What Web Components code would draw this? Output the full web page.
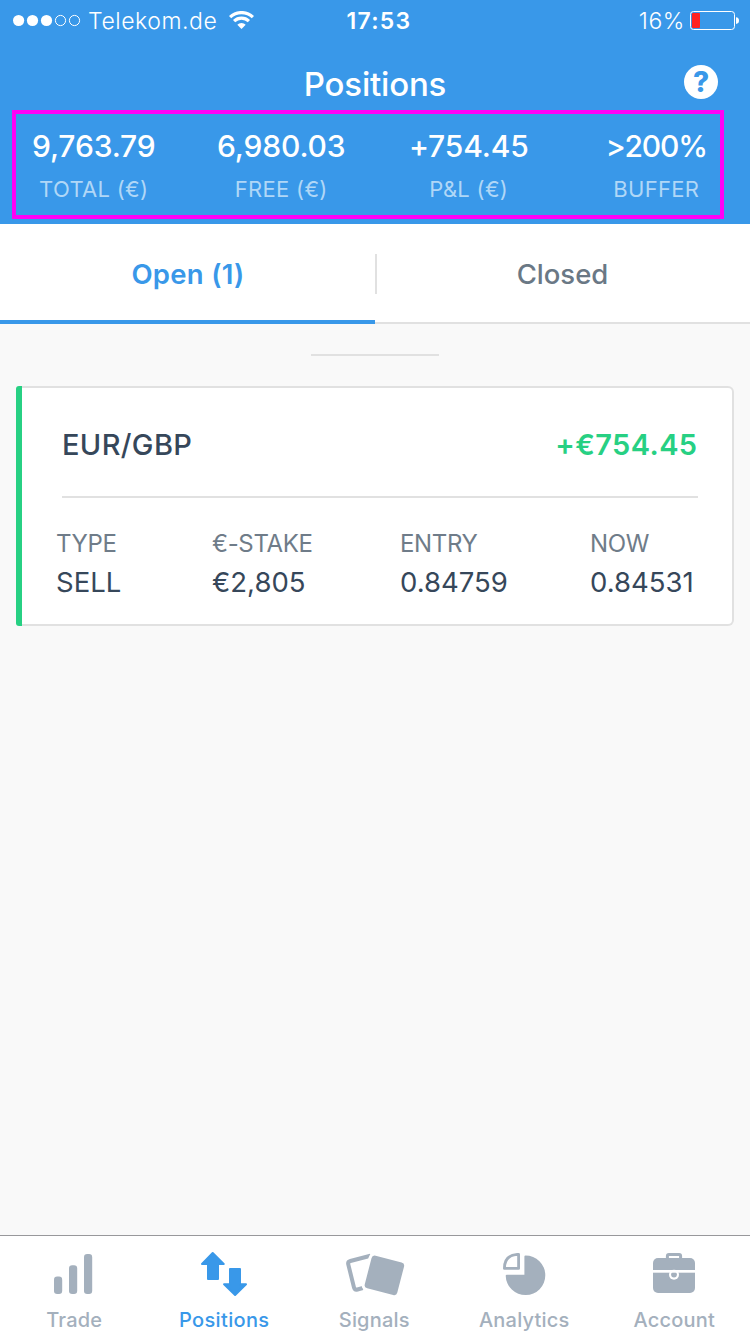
<!DOCTYPE html>
<html lang="en">
<head>
<meta charset="utf-8">
<title>Positions</title>
<style>
	body{
		margin: 0;
		font-family: Inter, "Liberation Sans", sans-serif;
		background-color: #f9f9f9;
	}
</style>
</head>
<body>
<positions-app></positions-app>
<script>
(function(){
// Start of enclosed scope

// Base for all elements, each one only supplies its template.
class BaseElement extends HTMLElement {
	constructor () {
		super();
		this.attachShadow({mode: 'open'});
	}
	connectedCallback(){
		this.shadowRoot.innerHTML = this.template();
	}
	attr(name){
		return this.getAttribute(name) || '';
	}
}

class StatusBar extends BaseElement {
	template(){ return html`<style>
	:host{
		display: grid;
		grid-template-columns: 1fr auto 1fr;
		align-items: center;
		height: 41px;
		padding: 0 11px 0 12px;
		color: white;
		font-size: 23px;
		line-height: 28px;
	}
	div{ display: flex; align-items: center; }
	.carrier{ letter-spacing: 0.55px; margin-left: 7px; font-weight: 300; }
	.wifi{ margin-left: 11.5px; }
	.time{ padding-left: 7px; font-weight: 600; letter-spacing: 1.3px; }
	.right{ justify-content: flex-end; gap: 5px; font-weight: 300; letter-spacing: 0.6px; }
</style>
<div>
	<svg width="69" height="13" viewBox="0 0 69 13">
		<g fill="white"><circle cx="6.6" cy="6.5" r="5.6"/><circle cx="20.5" cy="6.5" r="5.6"/><circle cx="34.5" cy="6.5" r="5.6"/></g>
		<g fill="none" stroke="white"><circle cx="48.5" cy="6.5" r="5.1"/><circle cx="62.5" cy="6.5" r="5.1"/></g>
	</svg>
	<span class="carrier">Telekom.de</span>
	<svg class="wifi" width="25" height="18.5" viewBox="0.5 0.5 25 18.5">
		<g fill="none" stroke="white" stroke-width="3.2">
			<path d="M1.6 6.7A16.3 16.3 0 0 1 24.4 6.7"/>
			<path d="M5.6 10.7A10.6 10.6 0 0 1 20.4 10.7"/>
		</g>
		<path d="M13 18.4L8.8 14.2A6 6 0 0 1 17.2 14.2Z" fill="white"/>
	</svg>
</div>
<span class="time">17:53</span>
<div class="right">
	<span>16%</span>
	<svg width="49" height="20" viewBox="0 0 49 20">
		<rect x="0.5" y="0.5" width="44" height="18" rx="3" fill="none" stroke="white"/>
		<rect x="1.9" y="2" width="8.1" height="15" rx="1" fill="#ff2320"/>
		<path d="M46 6.3Q49 6.5 49 9.6Q49 12.8 46 13Z" fill="white"/>
	</svg>
</div>`}
}

class TitleBar extends BaseElement {
	template(){ return html`<style>
	:host{
		display: grid;
		grid-template-columns: 1fr auto 1fr;
		align-items: center;
		height: 86px;
		color: white;
	}
	h1{
		grid-column: 2;
		margin: 0;
		font-size: 33px;
		font-weight: 450;
		line-height: 40px;
		letter-spacing: -0.2px;
	}
	.help{
		justify-self: end;
		display: grid;
		place-items: center;
		width: 34px;
		height: 34px;
		margin: 0 32px 4px 0;
		border-radius: 50%;
		background-color: white;
		color: #3998e9;
		font-size: 28px;
		font-weight: 800;
		line-height: 34px;
	}
</style>
<h1><slot></slot></h1>
<span class="help">?</span>`}
}

class AccountStat extends BaseElement {
	template(){ return html`<style>
	:host{
		display: flex;
		flex-direction: column;
		align-items: center;
		color: white;
	}
	.value{ font-size: 30px; font-weight: 450; line-height: 38px; letter-spacing: var(--value-spacing, -0.15px); }
	.label{ margin-top: 10px; font-size: 22px; line-height: 28px; letter-spacing: 0.3px; color: #b0d7f7; }
</style>
<span class="value"><slot></slot></span>
<span class="label">${this.attr('label')}</span>`}
}

class AccountSummary extends BaseElement {
	template(){ return html`<style>
	:host{
		display: grid;
		grid-template-columns: repeat(4, 1fr);
		height: 97px;
	}
	::slotted(:last-child){ --value-spacing: -1.2px; }
	/* Highlight frame lies over the header */
	.frame{
		position: absolute;
		top: 110px;
		left: 12px;
		width: 712px;
		height: 109px;
		box-sizing: border-box;
		border: 4px solid #ff00f6;
	}
</style>
<slot></slot>
<div class="frame"></div>`}
}

class TabItem extends BaseElement {
	template(){ return html`<style>
	:host{
		display: block;
		box-sizing: border-box;
		height: 100px;
		border-bottom: 2px solid #e1e1e1;
		color: #6a7885;
		font-size: 27.5px;
		font-weight: 500;
		line-height: 100px;
		text-align: center;
	}
	:host([active]){
		padding-left: 1px;
		border-bottom: 4px solid #3998e9;
		color: #3998e9;
		font-weight: 600;
		letter-spacing: 0.3px;
	}
</style>
<slot></slot>`}
}

class TabStrip extends BaseElement {
	template(){ return html`<style>
	:host{
		display: grid;
		grid-template-columns: 375px 375px;
		position: relative;
		background-color: white;
	}
	.divider{
		position: absolute;
		left: 375px;
		top: 30px;
		width: 2px;
		height: 40px;
		background-color: #e1e1e1;
	}
</style>
<slot></slot>
<div class="divider"></div>`}
}

class CardField extends BaseElement {
	template(){ return html`<style>
	:host{ display: flex; flex-direction: column; }
	.label{ padding-top: 1px; font-size: 24px; line-height: 39px; letter-spacing: -0.35px; color: #6f7c89; }
	.value{ font-size: 27.5px; line-height: 38px; color: #36475a; }
</style>
<span class="label">${this.attr('label')}</span>
<span class="value"><slot></slot></span>`}
}

class PositionCard extends BaseElement {
	template(){ return html`<style>
	:host{
		display: grid;
		grid-template-columns: 6px 1fr;
		height: 240px;
		margin: 0 16px;
	}
	.stripe{
		border-radius: 3px 0 0 3px;
		background-color: #27d083;
	}
	.content{
		border: 2px solid #e1e1e1;
		border-left: 0;
		border-radius: 0 6px 6px 0;
		background-color: white;
	}
	header{
		display: flex;
		justify-content: space-between;
		height: 108px;
		margin: 0 34px 0 40px;
		border-bottom: 2px solid #e1e1e1;
		font-size: 29px;
		line-height: 114px;
		color: #36475a;
	}
	.pair{ font-weight: 500; letter-spacing: 0.35px; }
	.profit{ margin-right: 0.5px; font-weight: 600; color: #27d083; letter-spacing: 0.4px; }
	.fields{
		display: grid;
		grid-template-columns: 156px 188px 190px auto;
		margin: 25px 0 0 34px;
	}
</style>
<div class="stripe"></div>
<div class="content">
	<header>
		<span class="pair">${this.attr('pair')}</span>
		<span class="profit">${this.attr('profit')}</span>
	</header>
	<div class="fields"><slot></slot></div>
</div>`}
}

// Icons are drawn on a field with the full width of one navigation item.
const icons = {
	trade: `<rect x="54" y="36.6" width="8.2" height="17.4" rx="3.2"/>
		<rect x="69" y="25.3" width="8.2" height="28.7" rx="3.2"/>
		<rect x="84" y="14" width="8.2" height="40" rx="3.2"/>`,
	positions: `<g stroke="currentColor" stroke-width="2" stroke-linejoin="round">
		<path d="M62.7 13L73.7 24H68V39H58V24H52Z"/>
		<path d="M80 29H90V44.2H96L85.1 55L74.1 44.2H80Z"/></g>`,
	signals: `<path d="M70.5 15.7L50.4 21Q47.6 21.8 48.3 24.5L54 47.5Q54.7 50.2 57.5 49.5L62.8 48" fill="none" stroke="currentColor" stroke-width="4"/>
		<rect x="67.6" y="18.6" width="33.6" height="33.6" rx="3.4" transform="rotate(14.5 84.4 35.4)" stroke="white" stroke-width="6" paint-order="stroke"/>`,
	analytics: `<path d="M74.4 16.6Q74.4 15.5 75.5 15.5A19.8 19.8 0 1 1 55.7 35.8Q55.7 34.7 56.8 34.7H74.4Z"/>
		<path d="M68.6 14.4V28.4H54.4Q54.4 15.4 67.2 14.4Z" fill="none" stroke="currentColor" stroke-width="2.8" stroke-linejoin="round"/>`,
	account: `<path d="M67.4 19V16Q67.4 14.5 68.9 14.5H79.1Q80.6 14.5 80.6 16V19" fill="none" stroke="currentColor" stroke-width="3"/>
		<rect x="53" y="18" width="42" height="35" rx="5"/>
		<circle cx="74" cy="34.8" r="5" fill="white"/>
		<circle cx="74" cy="34.6" r="2.9"/>
		<rect x="53" y="30" width="42" height="2.7" fill="white"/>`
};

class NavItem extends BaseElement {
	template(){ return html`<style>
	:host{
		display: flex;
		flex-direction: column;
		color: #a4b0bd;
		font-size: 20px;
		font-weight: 500;
		text-align: center;
		letter-spacing: 0.2px;
	}
	:host([active]){ color: #3998e9; font-weight: 550; letter-spacing: 0.35px; }
	svg{ display: block; }
	span{ margin-top: 4px; padding-right: 1.5px; line-height: 24px; }
</style>
<svg width="150" height="60" viewBox="0 4 150 60" fill="currentColor">${icons[this.attr('icon')]}</svg>
<span><slot></slot></span>`}
}

class BottomNav extends BaseElement {
	template(){ return html`<style>
	:host{
		display: grid;
		grid-template-columns: repeat(5, 150px);
		box-sizing: border-box;
		height: 99px;
		padding-top: 8px;
		border-top: 1px solid #98989b;
		background-color: white;
	}
</style>
<slot></slot>`}
}

class PositionsApp extends BaseElement {
	template(){ return html`<style>
	:host{
		display: flex;
		flex-direction: column;
		width: 750px;
		height: 1334px;
		overflow: hidden;
	}
	.top{ background-color: #3998e9; }
	main{ flex: 1; }
	hr{
		width: 128px;
		height: 2px;
		margin: 30px auto;
		border: 0;
		background-color: #e1e1e1;
	}
</style>
<div class="top">
	<status-bar></status-bar>
	<title-bar>Positions</title-bar>
	<account-summary>
		<account-stat label="TOTAL (€)">9,763.79</account-stat>
		<account-stat label="FREE (€)">6,980.03</account-stat>
		<account-stat label="P&amp;L (€)">+754.45</account-stat>
		<account-stat label="BUFFER">&gt;200%</account-stat>
	</account-summary>
</div>
<tab-strip>
	<tab-item active>Open (1)</tab-item>
	<tab-item>Closed</tab-item>
</tab-strip>
<main>
	<hr>
	<position-card pair="EUR/GBP" profit="+€754.45">
		<card-field label="TYPE">SELL</card-field>
		<card-field label="€-STAKE">€2,805</card-field>
		<card-field label="ENTRY">0.84759</card-field>
		<card-field label="NOW">0.84531</card-field>
	</position-card>
</main>
<bottom-nav>
	<nav-item icon="trade">Trade</nav-item>
	<nav-item icon="positions" active>Positions</nav-item>
	<nav-item icon="signals">Signals</nav-item>
	<nav-item icon="analytics">Analytics</nav-item>
	<nav-item icon="account">Account</nav-item>
</bottom-nav>`}
}

window.customElements.define('status-bar', StatusBar)
window.customElements.define('title-bar', TitleBar)
window.customElements.define('account-stat', AccountStat)
window.customElements.define('account-summary', AccountSummary)
window.customElements.define('tab-item', TabItem)
window.customElements.define('tab-strip', TabStrip)
window.customElements.define('card-field', CardField)
window.customElements.define('position-card', PositionCard)
window.customElements.define('nav-item', NavItem)
window.customElements.define('bottom-nav', BottomNav)
window.customElements.define('positions-app', PositionsApp)

// Support Functions
// Plain join, named html so editors highlight the template literals.
function html(strArr, ...args){
	let str = '';
	for(let i=0; i<strArr.length; str+=(args[i++] ?? '')) str+=strArr[i];
	return str;
}

// End of enclosed scope
})();
</script>
</body>
</html>
